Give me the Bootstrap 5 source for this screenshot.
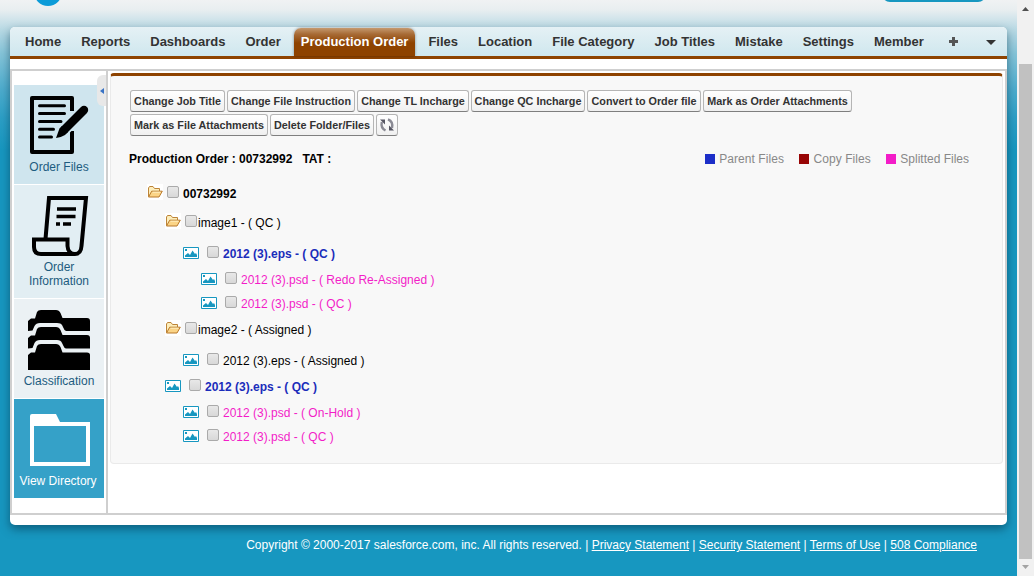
<!DOCTYPE html>
<html lang="en">
<head>
<meta charset="utf-8">
<meta name="viewport" content="width=device-width, initial-scale=1">
<title>Production Order</title>
<link href="https://cdn.jsdelivr.net/npm/bootstrap@5.3.0/dist/css/bootstrap.min.css" rel="stylesheet">
<style>
html,body{height:100%}
body{font:12px/14px "Liberation Sans",Arial,sans-serif;color:#000;overflow:hidden;background:#1797c0}
.page{width:1017px;height:576px;background:linear-gradient(#f0f2f3 0,#e8eef0 10px,#cfe3ea 20px,#b7d9e4 30px,#84c4d9 54px,#4fadce 88px,#2c9fc6 118px,#1797c0 150px);overflow:hidden}
.topline{height:27px}
.avatar{width:28px;height:28px;margin:-22px 0 0 34px;background:#0b9bd8}
.askbtn{width:104px;height:20px;margin:-18px 31px 0 0;background:#1797c0;border-radius:8px}
.shell{width:997px;height:498px;margin-left:10px;background:#fff;border-radius:5px;box-shadow:0 4px 10px 0 rgba(0,40,60,.5)}
.tabs{height:32px;background:linear-gradient(#e5f1f5,#cfe7ee);border-bottom:3px solid #8e4300;border-radius:5px 5px 0 0;padding-left:8px;gap:6px}
.tabs a{font-weight:bold;font-size:13px;line-height:28px;color:#333;text-decoration:none;padding:0 7px;height:28px;white-space:nowrap}
.tabs a.active{background:linear-gradient(#c5996f,#a86c37 6px,#8e4300 15px);color:#fff;border-radius:7px 7px 0 0;box-shadow:0 0 3px rgba(0,0,0,.4);width:121px}
.tabs .after{margin-left:.6px}
.tabs a.plus{margin-left:5px;line-height:26px}
.tabs a.more{margin-left:5px;padding-left:10px;line-height:27px}
.frame{height:446px;margin-top:10px;border:2px solid #cfcfcf}
.side{width:96px;border-right:2px solid #cfcfcf;padding:14px 2px 0}
.tile{width:90px;height:99px;margin-bottom:1px;color:#1d5c80;text-align:center}
.tile.t1{background:#cfe5ee}.tile.t2{background:#e2eef3;height:113px}.tile.t3{background:#ebf1f4}.tile.t4{background:#35a1c8;color:#fff;padding-right:2px}
.tile svg{display:block}
.collapser{left:85px;top:4px;width:9px;height:31px;background:#e8e8e8;border-radius:6px 0 0 6px}
.panel{margin:2px 2px 0 2px;width:893px;height:391px;background:#f8f8f8;border:1px solid #eaeaea;border-top:3px solid #8e4300;border-radius:4px;padding:14px 0 0 19px}
.tools{width:740px;gap:2px}
.tool{height:22px;padding:0;border:1px solid #b5b5b5;border-bottom-color:#7f7f7f;border-radius:3px;background:linear-gradient(#fff,#f0f0f0);font-weight:bold;font-size:10.8px;line-height:20px;color:#333;text-align:center;white-space:nowrap}
.w95{width:95px}.w128{width:128px}.w112{width:112px}.w114{width:114px}.w149{width:149px}.w138{width:138px}.w104{width:104px}.w22{width:22px}
.heading{height:14px;margin-top:16px;margin-left:-1px;padding-right:33px}
.heading b{white-space:pre}
.legend{color:#888;gap:15px}
.legend i{width:10px;height:10px;margin-right:4.500px}
.legend span:nth-child(-n+2){letter-spacing:.06px}
.tree{margin-top:18px;margin-left:-1px}
.tree>div{height:20px;margin-top:4px;white-space:pre}
.tree .g6{margin-top:6px}.tree .g9{margin-top:9px}.tree .g11{margin-top:11px}
.l0{padding-left:18px}.l1{padding-left:36px}.l2{padding-left:54px}.l3{padding-left:72px}
.cb{width:12px;height:12px;border:1px solid #aaa;border-radius:2px;background:linear-gradient(#e8e8e8,#d8d8d8);margin:0 4px 5px 8px;flex:none}
.cb.near{margin-left:4px}.cb.tight{margin-left:4px;margin-right:1px}
.fold{width:16px;height:16px;margin-bottom:4px;background:#fff}
.pic{width:16px;height:12px;margin-bottom:2px}
.blue{color:#1b2dbb}.pink{color:#f31dc8}
footer{width:997px;color:#fff;padding:13px 20px 0 0;text-align:right;white-space:nowrap}
footer a{color:#fff}
.scroll{width:17px;height:576px;background:#f1f1f1}
.thumb{width:13px;height:495px;background:#c1c1c1}
</style>
</head>
<body>
<svg class="d-none" xmlns="http://www.w3.org/2000/svg">
<symbol id="fold" viewBox="0 0 16 16"><path d="M1.500 12.500V4L2.500 2.500H6L7.500 4.500H12.500V7" fill="#fdeebb" stroke="#bd8438"/><path d="M1.500 13L4.700 7.200H15.300L12 13Z" fill="#fbd486" stroke="#b9792a"/><path d="M5.500 8.200H13.500" stroke="#fff0c4"/></symbol>
<symbol id="pic" viewBox="0 0 16 12"><path d="M.5.5H15.500V11.500H.5Z" fill="#fff" stroke="#1797c0"/><path d="M2 10V8.500L5 6L7 8L9.500 3.500L12 7L13 6L14 8V10ZM2 2H4V4H2Z" fill="#1797c0"/></symbol>
</svg>
<div class="d-flex">
<div class="page">
  <div class="topline d-flex justify-content-between align-items-start"><div class="avatar rounded-circle"></div><div class="askbtn"></div></div>
  <main class="shell">
    <nav class="tabs d-flex align-items-end">
      <a href="#">Home</a><a href="#">Reports</a><a href="#">Dashboards</a><a href="#">Order</a><a href="#" class="active">Production Order</a><a href="#" class="after">Files</a><a href="#">Location</a><a href="#">File Category</a><a href="#">Job Titles</a><a href="#">Mistake</a><a href="#">Settings</a><a href="#">Member</a>
      <a href="#" class="plus" aria-label="All tabs"><svg width="9" height="9" viewBox="0 0 9 9"><path d="M3 0H6V3H9V6H6V9H3V6H0V3H3Z" fill="#555"/></svg></a>
      <a href="#" class="more" aria-label="More"><svg width="10" height="5" viewBox="0 0 10 5"><path d="M0 0H10L5 5Z" fill="#333"/></svg></a>
    </nav>
    <div class="frame d-flex">
      <aside class="side position-relative flex-shrink-0">
        <div class="tile t1"><svg width="90" height="75" viewBox="14 85 90 75"><path d="M72 111V98H32V152H72V131" fill="none" stroke="#000" stroke-width="4" stroke-linejoin="round"/><path d="M39.500 105.800H64.500M39.500 113.600H64.500M39.500 121.400H61M39.500 129.200H53.500M39.500 137H51.500" stroke="#000" stroke-width="3" stroke-linecap="round"/><path d="M84 110L65 129" stroke="#cfe5ee" stroke-width="12" stroke-linecap="round"/><path d="M84 110L64.500 129.500" stroke="#000" stroke-width="8.400" stroke-linecap="round"/><path d="M56 138L59.500 128.500L62 126L68 132L65 135Q61 137.500 56 138Z"/></svg>Order Files</div>
        <div class="tile t2"><svg width="90" height="75" viewBox="14 185 90 75"><path d="M45.500 239L49 198H86L81.500 246Q81 254 75 254H41Q34 254 34 247V239.500H67.500V246Q68 254 75 254" fill="none" stroke="#000" stroke-width="4"/><path d="M57 209H76M56.500 216.500H75.500M56 224H60M63 224H71" stroke="#000" stroke-width="3.600"/></svg>Order<br>Information</div>
        <div class="tile t3"><svg width="90" height="75" viewBox="14 299 90 75"><path d="M28 331V321L31 318.500H35L37 312Q38 310 41 310H56Q59 310 60.500 313L62.500 318H87Q90 318 90 321V331H66Q64.500 331 63.500 328L62 325Q61 323 57 323H40Q36 323 34.500 326L32.500 330.500Z"/><path d="M28 348.500V338L31 335.500H35L37 329Q38 327 41 327H56Q59 327 60.500 330L62.500 335H87Q90 335 90 338V348.500H66Q64.500 348.500 63.500 346L62 343Q61 340 57 340H40Q36 340 34.500 343L32.500 348Z"/><path d="M28 370V355L31 352.500H35L37 346Q38 344 41 344H56Q59 344 60.500 347L62.500 352.500H87Q90 352.500 90 355V370Z"/></svg>Classification</div>
        <div class="tile t4"><svg width="90" height="75" viewBox="14 399 90 75"><path d="M30 466V416Q30 414 32 414H56L60 422H90V466ZM34 426V462H86V426Z" fill="#fff" fill-rule="evenodd"/></svg>View Directory</div>
        <div class="collapser position-absolute d-flex align-items-center justify-content-center"><svg width="4" height="6" viewBox="0 0 4 6"><path d="M4 0V6L0 3Z" fill="#3973c5"/></svg></div>
      </aside>
      <section class="panel">
        <div class="tools d-flex flex-wrap">
          <button class="tool w95">Change Job Title</button><button class="tool w128">Change File Instruction</button><button class="tool w112">Change TL Incharge</button><button class="tool w114">Change QC Incharge</button><button class="tool w114">Convert to Order file</button><button class="tool w149">Mark as Order Attachments</button><button class="tool w138">Mark as File Attachments</button><button class="tool w104">Delete Folder/Files</button><button class="tool w22 d-flex align-items-center justify-content-center" aria-label="Refresh"><svg width="16" height="16" viewBox="0 0 16 16" fill="none"><path d="M6.500 13.500Q1.500 11 2.800 5" stroke="#8a8a94" stroke-width="2.400"/><path d="M1 2.500H6V7.500Z" fill="#555562"/><path d="M9 2.300Q14.500 4.500 13 11" stroke="#8a8a94" stroke-width="2.400"/><path d="M15 13.500H10V8.500Z" fill="#555562"/></svg></button>
        </div>
        <div class="heading d-flex justify-content-between">
          <b>Production Order : 00732992   TAT :</b>
          <div class="legend d-flex">
            <span class="d-flex align-items-center"><i style="background:#1c2ec8"></i>Parent Files</span>
            <span class="d-flex align-items-center"><i style="background:#980505"></i>Copy Files</span>
            <span class="d-flex align-items-center"><i style="background:#f31dc8"></i>Splitted Files</span>
          </div>
        </div>
        <div class="tree">
          <div class="l0 d-flex align-items-center"><svg class="fold"><use href="#fold"/></svg><span class="cb near"></span><b>00732992</b></div>
          <div class="l1 g9 d-flex align-items-center"><svg class="fold"><use href="#fold"/></svg><span class="cb tight"></span><span>image1 - ( QC )</span></div>
          <div class="l2 g11 d-flex align-items-center blue"><svg class="pic"><use href="#pic"/></svg><span class="cb"></span><b>2012 (3).eps - ( QC )</b></div>
          <div class="l3 g6 d-flex align-items-center pink"><svg class="pic"><use href="#pic"/></svg><span class="cb"></span><span>2012 (3).psd - ( Redo Re-Assigned )</span></div>
          <div class="l3 d-flex align-items-center pink"><svg class="pic"><use href="#pic"/></svg><span class="cb"></span><span>2012 (3).psd - ( QC )</span></div>
          <div class="l1 g6 d-flex align-items-center"><svg class="fold"><use href="#fold"/></svg><span class="cb tight"></span><span>image2 - ( Assigned )</span></div>
          <div class="l2 g11 d-flex align-items-center"><svg class="pic"><use href="#pic"/></svg><span class="cb"></span><span>2012 (3).eps - ( Assigned )</span></div>
          <div class="l1 g6 d-flex align-items-center blue"><svg class="pic"><use href="#pic"/></svg><span class="cb"></span><b>2012 (3).eps - ( QC )</b></div>
          <div class="l2 g6 d-flex align-items-center pink"><svg class="pic"><use href="#pic"/></svg><span class="cb"></span><span>2012 (3).psd - ( On-Hold )</span></div>
          <div class="l2 d-flex align-items-center pink"><svg class="pic"><use href="#pic"/></svg><span class="cb"></span><span>2012 (3).psd - ( QC )</span></div>
        </div>
      </section>
    </div>
  </main>
  <footer>Copyright © 2000-2017 salesforce.com, inc. All rights reserved. | <a href="#">Privacy Statement</a> | <a href="#">Security Statement</a> | <a href="#">Terms of Use</a> | <a href="#">508 Compliance</a></footer>
</div>
<div class="scroll d-flex flex-column align-items-center">
  <svg width="17" height="64" viewBox="0 0 17 64"><path d="M5 11H12L8.500 7Z" fill="#505050"/></svg>
  <div class="thumb"></div>
  <svg width="17" height="17" viewBox="0 0 17 17"><path d="M5 6H12L8.500 10Z" fill="#a3a3a3"/></svg>
</div>
</div>
<script src="https://cdn.jsdelivr.net/npm/bootstrap@5.3.0/dist/js/bootstrap.bundle.min.js"></script>
</body>
</html>
